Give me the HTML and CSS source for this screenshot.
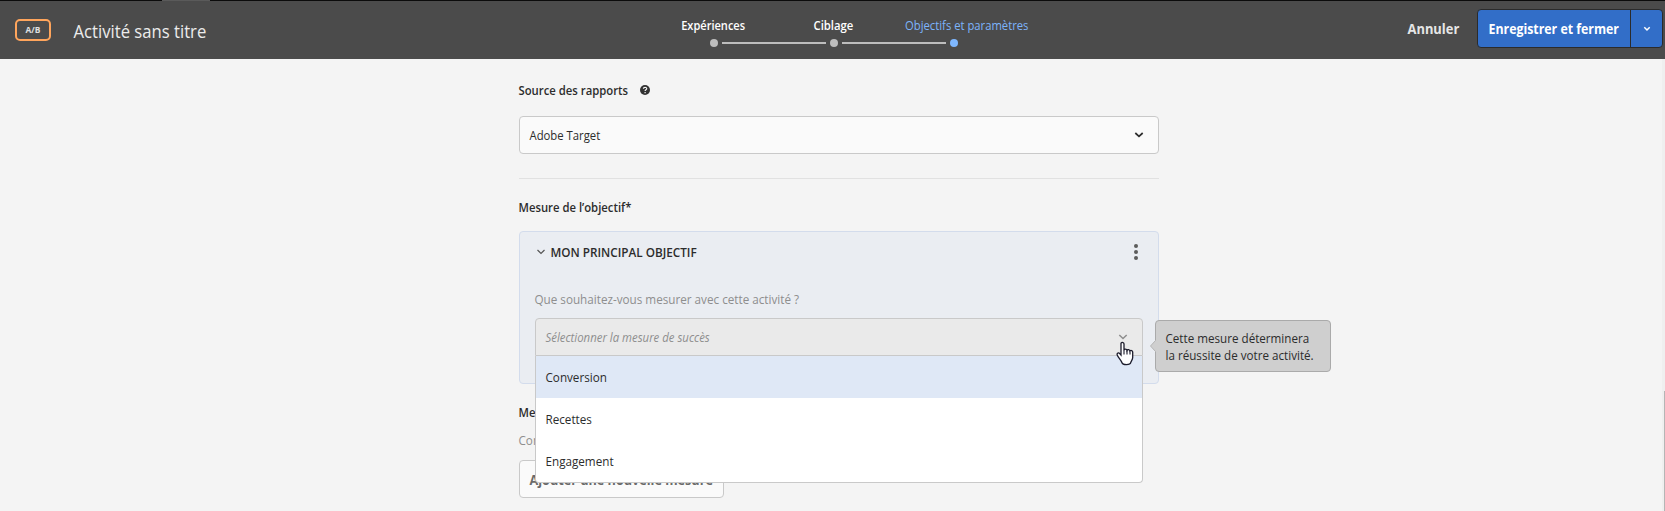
FILE: index.html
```html
<!DOCTYPE html>
<html lang="fr">
<head>
<meta charset="utf-8">
<title>Activité sans titre</title>
<link rel="stylesheet" href="styles.css">
</head>
<body>
<header class="topbar">
  <div class="identity">
    <span class="badge"><span class="t t-badge">A/B</span></span>
    <h1 class="title"><span class="t t-title">Activité sans titre</span></h1>
  </div>
  <ol class="steps">
    <li class="step"><span class="t t-step1">Expériences</span><i class="dot"></i></li>
    <li class="rail"></li>
    <li class="step"><span class="t t-step2">Ciblage</span><i class="dot"></i></li>
    <li class="rail"></li>
    <li class="step current"><span class="t t-step3">Objectifs et paramètres</span><i class="dot"></i></li>
  </ol>
  <div class="actions">
    <span class="cancel"><span class="t t-cancel">Annuler</span></span>
    <div class="save">
      <span class="save-main"><span class="t t-save">Enregistrer et fermer</span></span>
      <span class="save-more"><svg width="8" height="6" viewBox="0 0 8 6"><path d="M1.3 1.3 4 4 6.7 1.3" fill="none" stroke="#fff" stroke-width="1.5"/></svg></span>
    </div>
  </div>
</header>
<main class="page">
  <section class="column">
    <div class="label source"><span class="t t-source">Source des rapports</span>
      <svg class="help" width="10" height="10" viewBox="0 0 10 10"><circle cx="5" cy="5" r="5" fill="#323232"/><path d="M3.4 3.8C3.4 1.8 6.7 1.8 6.7 3.7 6.7 4.8 5.1 4.9 5.1 6.1M5.1 6.9v1.3" fill="none" stroke="#f5f5f5" stroke-width="1.2"/></svg>
    </div>
    <div class="select"><span class="t t-target">Adobe Target</span>
      <svg width="10" height="6" viewBox="0 0 10 6"><path d="M1.3 1 5 4.4 8.7 1" fill="none" stroke="#2c2c2c" stroke-width="1.7"/></svg>
    </div>
    <hr class="divider">
    <div class="label goal"><span class="t t-goal">Mesure de l’objectif*</span></div>
    <div class="card">
      <div class="card-head">
        <svg width="8" height="6" viewBox="0 0 8 6"><path d="M.5 1 4 4.5 7.5 1" fill="none" stroke="#555" stroke-width="1.2"/></svg>
        <span class="t t-main">MON PRINCIPAL OBJECTIF</span>
        <svg class="more" width="4" height="16" viewBox="0 0 4 16"><g fill="#5c5c5c"><circle cx="2" cy="2" r="2"/><circle cx="2" cy="8" r="2"/><circle cx="2" cy="14" r="2"/></g></svg>
      </div>
      <div class="question"><span class="t t-question">Que souhaitez-vous mesurer avec cette activité ?</span></div>
      <div class="metric">
        <div class="metric-value"><span class="t t-metric">Sélectionner la mesure de succès</span>
          <svg width="10" height="6" viewBox="0 0 10 6"><path d="M1.3 1 5 4.5 8.7 1" fill="none" stroke="#8e8e8e" stroke-width="1.5"/></svg>
        </div>
        <ul class="menu">
          <li class="option active"><span class="t t-opt">Conversion</span></li>
          <li class="option"><span class="t t-opt">Recettes</span></li>
          <li class="option"><span class="t t-opt">Engagement</span></li>
        </ul>
        <svg class="cursor" width="20" height="26" viewBox="0 0 20 26"><path d="M6 2.2C7.2.8 9 1.5 9 3v6.2c.3-1.4 2.7-1.4 3 .2.6-1.3 2.7-.9 2.9.6.8-1 2.7-.5 2.8 1.1v5.4c0 2.3-1.8 3.7-2 5.2-.3 2.5-8 2.5-8.7 0-.6-2.2-3.7-5-4.8-7.6-.8-1.9 1.4-3 2.7-1.3L6 14z" fill="#fff" stroke="#1c1c2c" stroke-width="1.3"/><path d="M9 9v4.5M12 9.5v4M15 10.5v3" fill="none" stroke="#1c1c2c" stroke-width="1.1"/></svg>
        <div class="tooltip"><svg class="tip" width="6" height="12" viewBox="0 0 6 12"><path d="M6 0 .5 6 6 12z" fill="#cfcfcf"/><path d="M5.5.5.5 6l5 5.5" fill="none" stroke="#b4b4b4"/></svg><div><span class="t t-tip">Cette mesure déterminera</span></div><div><span class="t t-tip">la réussite de votre activité.</span></div></div>
      </div>
    </div>
    <div class="label extra"><span class="t t-source">Me</span></div>
    <div class="hint"><span class="t t-opt">Con</span></div>
    <div class="add"><span class="t t-add">Ajouter une nouvelle mesure</span></div>
  </section>
  <div class="scroll"><i class="thumb"></i></div>
</main>
</body>
</html>
```
FILE: styles.css
```css
* { box-sizing: border-box; }
body { margin: 0; height: 511px; overflow: hidden; background: #f4f4f4; color: #2c2c2c; font: 13px/18px "Open Sans", "Noto Sans", sans-serif; }
svg { display: block; flex: none; }
ol, ul { list-style: none; margin: 0; padding: 0; }

/* Narrowed lettering: each run is condensed from its left edge */
.t { display: inline-block; white-space: nowrap; transform-origin: 0 50%; transform: translateX(-.5px) scaleX(var(--w, .89)); }
.t-badge { --w: .93; }
.t-title { --w: .877; }
.t-step1 { --w: .85; }
.t-step2 { --w: .87; }
.t-step3 { --w: .866; }
.t-cancel { --w: .86; }
.t-save { --w: .823; }
.t-source { --w: .87; }
.t-target { --w: .87; }
.t-goal { --w: .869; }
.t-main { --w: .903; }
.t-question { --w: .899; }
.t-metric { --w: .875; }
.t-opt { --w: .898; }
.t-tip { --w: .895; }
.t-add { --w: .843; }

.topbar { position: relative; display: grid; grid-template-columns: 683px 1fr auto; height: 59px; background: linear-gradient(90deg, #0b0b0b 162px, #5a5a5a 162px 210px, #0b0b0b 210px) 0 0 / 100% 1px no-repeat #4b4b4b; color: #fff; }
.identity { display: flex; padding: 19px 0 0 15px; }
.badge { width: 36px; height: 22px; padding-left: 9px; border: 2px solid #ffa55c; border-radius: 5px; font-size: 9px; font-weight: 700; line-height: 18px; color: #e0e0e0; }
.title { margin: -1px 0 0 23px; font-size: 19px; font-weight: 400; line-height: 26px; color: #ececec; }
.steps { display: flex; padding: 16px 0 0 27px; height: 59px; }
.step { width: 8px; display: flex; flex-direction: column; align-items: center; font-weight: 600; }
.rail { width: 104px; height: 2px; margin: 26px 4px 0; background: #bdbdbd; }
.step .t { transform-origin: 50% 50%; }
.dot { flex: none; width: 8px; height: 8px; margin-top: 5px; border-radius: 50%; background: #bdbdbd; }
.step.current { color: #7db4fb; font-weight: 400; }
.current .t { margin-left: 26px; }
.current .dot { background: #7fb8ff; }
.actions { display: flex; padding: 9px 2px 0 0; font-size: 15px; font-weight: 700; line-height: 38px; }
.cancel { width: 69px; color: #e6e6e6; }
.save { display: flex; width: 186px; height: 39px; border: 1px solid #2b2b2b; border-radius: 4px; background: #326ec8; }
.save-main { width: 153px; padding-left: 11px; border-right: 1px solid #2b2b2b; line-height: 37px; }
.save-more { flex: 1; display: grid; place-items: center; }

.page { display: flex; height: 452px; padding-left: 519px; }
.column { width: 640px; padding-top: 22px; }
.label { font-weight: 600; height: 18px; }
.source { display: flex; align-items: center; }
.source .t { flex: none; width: 121px; }
.select { display: flex; align-items: center; justify-content: space-between; height: 38px; margin-top: 17px; padding: 0 14px 0 10px; border: 1px solid #c9c9c9; border-radius: 4px; background: #fafafa; }
.divider { height: 1px; margin: 24px 0 0; border: 0; background: #e1e1e1; }
.goal { margin-top: 19px; }
.card { height: 153px; margin-top: 15px; padding: 11px 15px 0; border: 1px solid #d3dcec; border-radius: 4px; background: #eaedf2; }
.card-head { display: flex; align-items: center; height: 18px; padding-left: 2px; font-weight: 600; }
.card-head .t { margin-left: 6px; }
.more { margin: 0 5px 0 auto; }
.question { margin-top: 29px; color: #8e8e8e; }
.metric { position: relative; width: 608px; margin-top: 10px; }
.metric-value { display: flex; align-items: center; justify-content: space-between; height: 38px; padding: 0 14px 0 10px; border: 1px solid #c9c9c9; border-radius: 4px 4px 0 0; background: #eaeaea; color: #8e8e8e; font-style: italic; }
.menu { position: absolute; z-index: 1; top: 38px; left: 0; right: 0; border: 1px solid #c9c9c9; border-top: 0; border-radius: 0 0 4px 4px; overflow: hidden; background: #fff; }
.option { height: 42px; padding-left: 10px; line-height: 42px; }
.option.active { background: #dfe8f6; }
.cursor { position: absolute; z-index: 2; left: 580px; top: 23px; }
.tooltip { position: absolute; z-index: 2; left: 620px; top: 2px; width: 176px; height: 52px; padding: 9px 0 0 10px; border: 1px solid #aaa; border-radius: 4px; background: #cfcfcf; line-height: 17px; }
.tip { position: absolute; left: -6px; top: 19px; }
.extra { margin-top: 19px; }
.hint { margin-top: 10px; color: #8e8e8e; }
.add { width: 205px; height: 38px; margin-top: 11px; padding-left: 10px; border: 1px solid #c9c9c9; border-radius: 4px; background: #fafafa; color: #6a6a6a; font-size: 15px; font-weight: 700; line-height: 36px; }
.scroll { width: 3px; margin-left: auto; background: #efefef; }
.thumb { display: block; width: 1px; height: 120px; margin: 332px 0 0 2px; background: #b5b5b5; }
```
